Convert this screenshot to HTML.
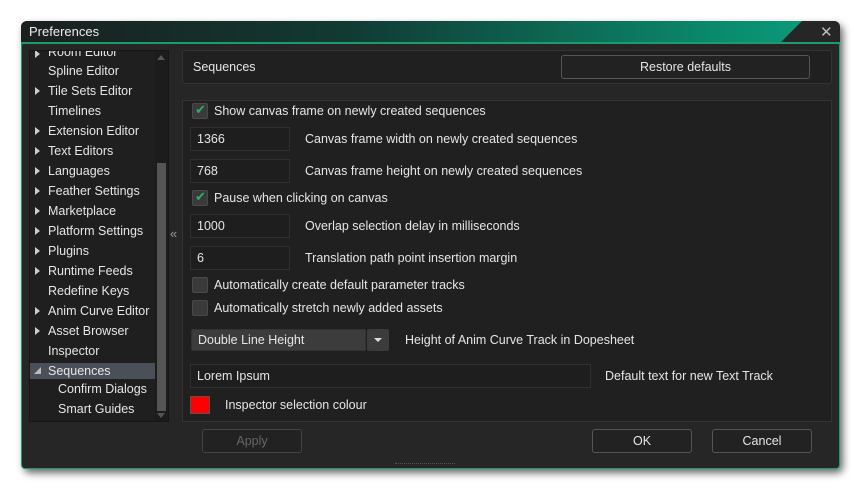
<!DOCTYPE html>
<html><head><style>
*{margin:0;padding:0;box-sizing:border-box}
body{width:860px;height:495px;background:#fff;position:relative;overflow:hidden;font-family:"Liberation Sans","DejaVu Sans",sans-serif;font-size:12.5px;color:#e6e6e6}
.a{position:absolute}
.win{left:21px;top:21px;width:819px;height:448px;background:#262626;border-radius:6px;box-shadow:3px 4px 8px rgba(0,0,0,.6)}
.title{left:21px;top:21px;width:819px;height:22px;border-radius:6px 6px 0 0;background:linear-gradient(90deg,#1b1f1f 0%,#113a33 40%,#0a8a6c 85%,#0aa080 100%)}
.body{left:21px;top:42px;width:819px;height:427px;background:#262626;border:1px solid #1a9c6c;border-radius:4px}
.tree{left:29px;top:50px;width:140px;height:372px;background:#1f1f1f;border:1px solid #161616;overflow:hidden}
.ti{position:absolute;left:18px;height:20px;line-height:20px;white-space:nowrap}
.arr{position:absolute;left:5px;width:0;height:0;border-left:5px solid #ccc;border-top:4px solid transparent;border-bottom:4px solid transparent;top:6px}
.box{background:#202020;border:1px solid #333}
.inp{position:absolute;background:#1e1e1e;border:1px solid #303030;height:24px;line-height:22px;padding-left:6px}
.lbl{position:absolute;white-space:nowrap}
.cb{position:absolute;width:16px;height:16px;background:#3a3a3a;border:1px solid #4a4a4a;border-radius:2px}
.btn{position:absolute;border:1px solid #555;border-radius:3px;background:#222;text-align:center;height:24px;line-height:22px}
</style></head><body>
<div class="a win"></div>
<div class="a body"></div>
<div class="a title"></div>
<div class="a" style="top:21px;height:22px;background:#262626;clip-path:polygon(22px 0,100% 0,100% 100%,0 100%);border-radius:0 6px 0 0;left:780px;width:60px"></div>
<div class="a" style="left:29px;top:24px;font-size:13px;color:#eee">Preferences</div>
<div class="a" style="left:820px;top:23px;font-size:15px;color:#bbb">✕</div>
<div class="a" style="left:21px;top:42px;width:819px;height:2px;background:#1a9c6c"></div>

<div class="a tree">
<div class="arr" style="top:-1px"></div><div class="ti" style="top:-9px">Room Editor</div>
<div class="ti" style="top:10px">Spline Editor</div>
<div class="arr" style="top:36px"></div><div class="ti" style="top:30px">Tile Sets Editor</div>
<div class="ti" style="top:50px">Timelines</div>
<div class="arr" style="top:76px"></div><div class="ti" style="top:70px">Extension Editor</div>
<div class="arr" style="top:96px"></div><div class="ti" style="top:90px">Text Editors</div>
<div class="arr" style="top:116px"></div><div class="ti" style="top:110px">Languages</div>
<div class="arr" style="top:136px"></div><div class="ti" style="top:130px">Feather Settings</div>
<div class="arr" style="top:156px"></div><div class="ti" style="top:150px">Marketplace</div>
<div class="arr" style="top:176px"></div><div class="ti" style="top:170px">Platform Settings</div>
<div class="arr" style="top:196px"></div><div class="ti" style="top:190px">Plugins</div>
<div class="arr" style="top:216px"></div><div class="ti" style="top:210px">Runtime Feeds</div>
<div class="ti" style="top:230px">Redefine Keys</div>
<div class="arr" style="top:256px"></div><div class="ti" style="top:250px">Anim Curve Editor</div>
<div class="arr" style="top:276px"></div><div class="ti" style="top:270px">Asset Browser</div>
<div class="ti" style="top:290px">Inspector</div>
<div style="position:absolute;left:0;top:312px;width:125px;height:16px;background:#4a5058"></div>
<div style="position:absolute;left:4px;top:316px;width:0;height:0;border-right:7px solid #bbb;border-top:7px solid transparent"></div>
<div class="ti" style="top:310px">Sequences</div>
<div class="ti" style="top:328px;left:28px">Confirm Dialogs</div>
<div class="ti" style="top:348px;left:28px">Smart Guides</div>
<div style="position:absolute;left:125px;top:0;width:13px;height:370px;background:#1c1c1c"></div>
<div style="position:absolute;left:127px;top:112px;width:9px;height:248px;background:#555"></div>
<div style="position:absolute;left:127px;top:4px;border-left:4px solid transparent;border-right:4px solid transparent;border-bottom:5px solid #555"></div>
<div style="position:absolute;left:127px;top:362px;border-left:4px solid transparent;border-right:4px solid transparent;border-top:5px solid #555"></div>
</div>
<div class="a" style="left:170px;top:226px;color:#999;font-size:13px">«</div>

<div class="a box" style="left:182px;top:50px;width:650px;height:34px;border-radius:3px"></div>
<div class="a" style="left:193px;top:60px">Sequences</div>
<div class="btn" style="left:561px;top:55px;width:249px">Restore defaults</div>

<div class="a box" style="left:182px;top:100px;width:650px;height:322px"></div>
<div class="cb" style="left:192px;top:103px"></div><div class="a" style="left:195px;top:102px;color:#2bb06a;font-size:13px">✔</div>
<div class="lbl" style="left:214px;top:104px">Show canvas frame on newly created sequences</div>
<div class="inp" style="left:190px;top:127px;width:100px">1366</div>
<div class="lbl" style="left:305px;top:132px">Canvas frame width on newly created sequences</div>
<div class="inp" style="left:190px;top:159px;width:100px">768</div>
<div class="lbl" style="left:305px;top:164px">Canvas frame height on newly created sequences</div>
<div class="cb" style="left:192px;top:190px"></div><div class="a" style="left:195px;top:189px;color:#2bb06a;font-size:13px">✔</div>
<div class="lbl" style="left:214px;top:191px">Pause when clicking on canvas</div>
<div class="inp" style="left:190px;top:214px;width:100px">1000</div>
<div class="lbl" style="left:305px;top:219px">Overlap selection delay in milliseconds</div>
<div class="inp" style="left:190px;top:246px;width:100px">6</div>
<div class="lbl" style="left:305px;top:251px">Translation path point insertion margin</div>
<div class="cb" style="left:192px;top:277px"></div>
<div class="lbl" style="left:214px;top:278px">Automatically create default parameter tracks</div>
<div class="cb" style="left:192px;top:300px"></div>
<div class="lbl" style="left:214px;top:301px">Automatically stretch newly added assets</div>
<div class="a" style="left:191px;top:329px;width:175px;height:22px;background:#3c3c3c;border:1px solid #333;border-radius:2px;padding-left:6px;line-height:20px">Double Line Height</div>
<div class="a" style="left:367px;top:329px;width:22px;height:22px;background:#3c3c3c;border-radius:2px"></div>
<div class="a" style="left:374px;top:338px;border-left:4px solid transparent;border-right:4px solid transparent;border-top:4px solid #ddd"></div>
<div class="lbl" style="left:405px;top:333px">Height of Anim Curve Track in Dopesheet</div>
<div class="inp" style="left:190px;top:364px;width:401px">Lorem Ipsum</div>
<div class="lbl" style="left:605px;top:369px">Default text for new Text Track</div>
<div class="a" style="left:190px;top:396px;width:20px;height:18px;background:#f00;border:1px solid #555"></div>
<div class="lbl" style="left:225px;top:398px">Inspector selection colour</div>

<div class="btn" style="left:202px;top:429px;width:100px;color:#666;border-color:#444">Apply</div>
<div class="btn" style="left:592px;top:429px;width:100px">OK</div>
<div class="btn" style="left:712px;top:429px;width:100px">Cancel</div>
<div class="a" style="left:395px;top:463px;width:60px;height:3px;border-top:1px dotted #555"></div>
</body></html>
